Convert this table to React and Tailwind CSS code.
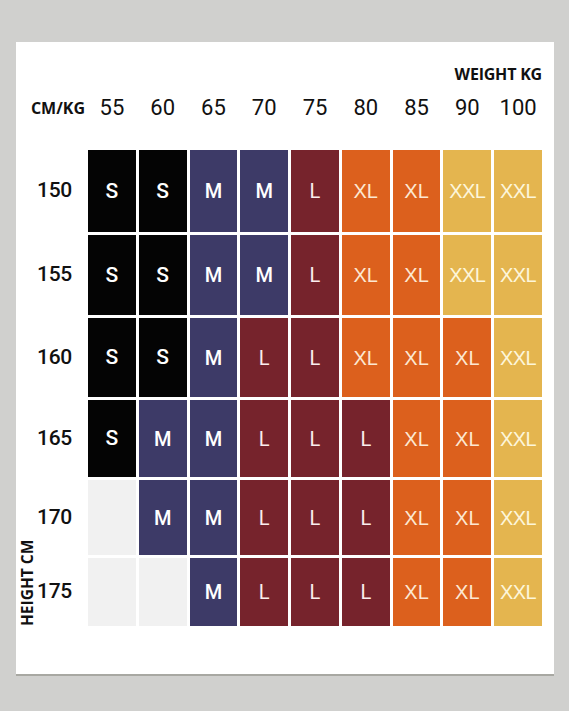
import React from 'react';

const weights = ['55', '60', '65', '70', '75', '80', '85', '90', '100'];

const rows = [
  { h: '150', cells: ['S', 'S', 'M', 'M', 'L', 'XL', 'XL', 'XXL', 'XXL'], height: 'h-[82px]' },
  { h: '155', cells: ['S', 'S', 'M', 'M', 'L', 'XL', 'XL', 'XXL', 'XXL'], height: 'h-[80px]' },
  { h: '160', cells: ['S', 'S', 'M', 'L', 'L', 'XL', 'XL', 'XL', 'XXL'], height: 'h-[79px]' },
  { h: '165', cells: ['S', 'M', 'M', 'L', 'L', 'L', 'XL', 'XL', 'XXL'], height: 'h-[77px]' },
  { h: '170', cells: ['', 'M', 'M', 'L', 'L', 'L', 'XL', 'XL', 'XXL'], height: 'h-[75px]' },
  { h: '175', cells: ['', '', 'M', 'L', 'L', 'L', 'XL', 'XL', 'XXL'], height: 'h-[68px]' },
];

const sizeStyle = {
  '': 'bg-[#f1f1f1]',
  S: 'bg-[#040404] text-white font-medium font-[Roboto,sans-serif] text-[21px]',
  M: 'bg-[#3d3a67] text-white font-medium font-[Roboto,sans-serif] text-[20px]',
  L: 'bg-[#76232c] text-[#fbeeee] font-[Roboto,sans-serif] text-[20px]',
  XL: 'bg-[#dc601d] text-[#fce8d2] font-["Liberation_Sans",Arial,sans-serif] text-[20px]',
  XXL: 'bg-[#e4b54f] text-[#fdf6da] font-["Liberation_Sans",Arial,sans-serif] text-[20px] tracking-[-0.6px]',
};

function Cell({ size }) {
  return (
    <div className={`flex items-center justify-center leading-none ${sizeStyle[size]}`}>
      {size}
    </div>
  );
}

export default function App() {
  return (
    <div className="w-[569px] h-[711px] bg-[#d0d0ce] pt-[42px] pl-[16px] pr-[15px]">
      <div className="h-[634px] bg-white border-b-2 border-[#a8a8a2] pt-[22px] pr-[12px] flex flex-col">
        {/* axis title */}
        <div className="h-[20px] flex items-center justify-end font-['Open_Sans',sans-serif] font-bold text-[16px] text-[#111] tracking-[-0.2px]">
          WEIGHT KG
        </div>

        {/* weight header */}
        <div className="mt-[12px] h-[24px] grid grid-cols-[69px_repeat(9,minmax(0,1fr))] gap-x-[3px] items-center">
          <div className="text-right font-['Open_Sans',sans-serif] font-bold text-[16px] text-[#111] leading-none">CM/KG</div>
          {weights.map(w => (
            <div key={w} className="text-center font-[Roboto,sans-serif] text-[22px] text-[#111] leading-none">
              {w}
            </div>
          ))}
        </div>

        {/* chart body */}
        <div className="relative mt-[30px] flex flex-col gap-[3px]">
          {rows.map(row => (
            <div key={row.h} className={`grid grid-cols-[69px_repeat(9,minmax(0,1fr))] gap-x-[3px] ${row.height}`}>
              <div className="flex items-center justify-end pr-[13px] font-[Roboto,sans-serif] font-medium text-[21px] text-[#111] tracking-[-0.3px]">
                {row.h}
              </div>
              {row.cells.map((c, i) => <Cell key={i} size={c} />)}
            </div>
          ))}

          <div className="absolute left-[4px] top-full origin-top-left -rotate-90 whitespace-nowrap font-['Open_Sans',sans-serif] font-bold text-[15.5px] leading-none text-[#111]">
            HEIGHT CM
          </div>
        </div>
      </div>
    </div>
  );
}
